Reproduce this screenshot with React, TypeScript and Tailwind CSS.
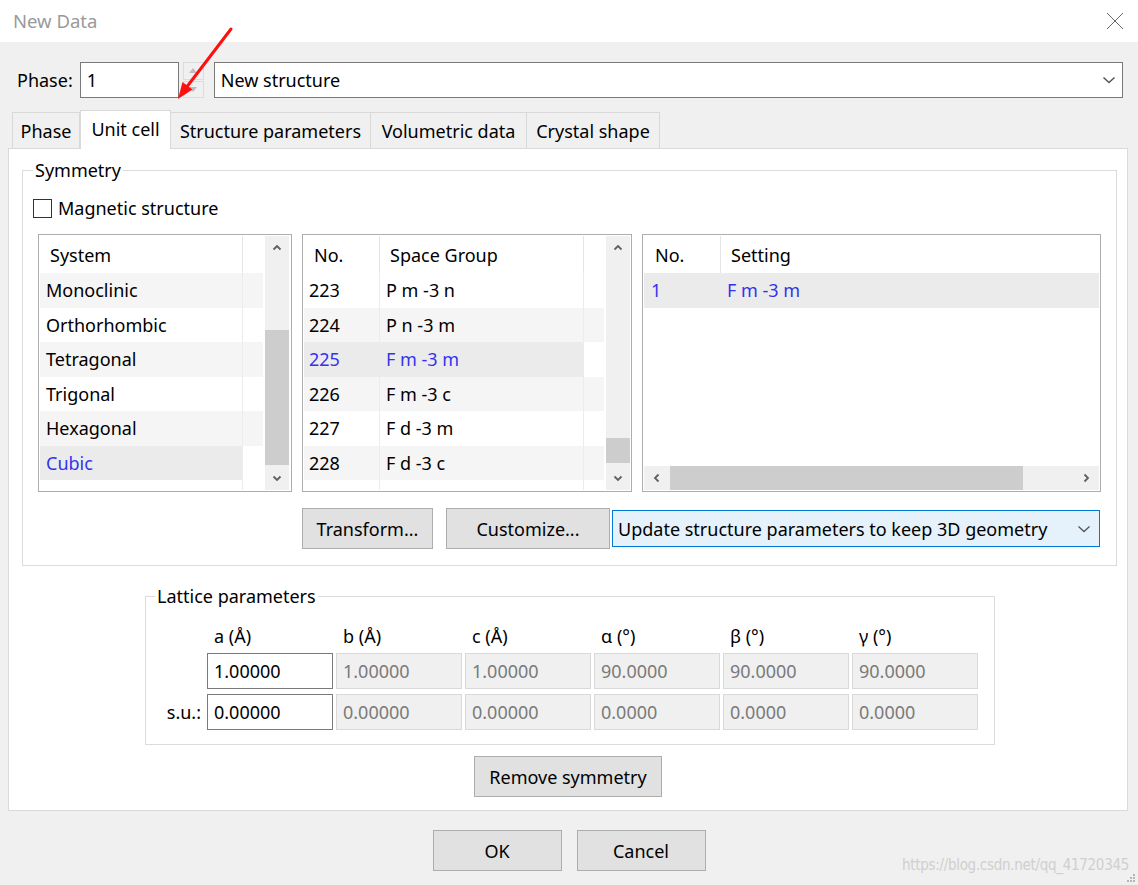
import React from 'react'

type Dir = 'up' | 'down' | 'left' | 'right'

function Caret({ dir, color = '#606060' }: { dir: Dir; color?: string }) {
  const d = {
    up: 'M1.5 6.5 L5 3 L8.5 6.5',
    down: 'M1.5 3.5 L5 7 L8.5 3.5',
    left: 'M6.5 1.5 L3 5 L6.5 8.5',
    right: 'M3.5 1.5 L7 5 L3.5 8.5',
  }[dir]
  return (
    <svg width="10" height="10" viewBox="0 0 10 10" fill="none">
      <path d={d} stroke={color} strokeWidth="1.8" />
    </svg>
  )
}

function VScroll({ thumb }: { thumb: string }) {
  return (
    <div className="w-[24px] h-full bg-[#f0f0f0] flex flex-col">
      <div className="h-[24px] flex items-center justify-center">
        <Caret dir="up" />
      </div>
      <div className={`w-full bg-[#cdcdcd] ${thumb}`} />
      <div className="flex-1" />
      <div className="h-[24px] flex items-center justify-center">
        <Caret dir="down" />
      </div>
    </div>
  )
}

function Button({ label, className = '' }: { label: string; className?: string }) {
  return (
    <div
      className={`h-[41px] bg-[#e1e1e1] border border-[#adadad] flex items-center justify-center text-black ${className}`}
    >
      {label}
    </div>
  )
}

const systems = ['Monoclinic', 'Orthorhombic', 'Tetragonal', 'Trigonal', 'Hexagonal', 'Cubic']
const groups = [
  ['223', 'P m -3 n'],
  ['224', 'P n -3 m'],
  ['225', 'F m -3 m'],
  ['226', 'F m -3 c'],
  ['227', 'F d -3 m'],
  ['228', 'F d -3 c'],
]
const latticeHeads = ['a (Å)', 'b (Å)', 'c (Å)', 'α (°)', 'β (°)', 'γ (°)']
const latticeVals = ['1.00000', '1.00000', '1.00000', '90.0000', '90.0000', '90.0000']
const latticeSu = ['0.00000', '0.00000', '0.00000', '0.0000', '0.0000', '0.0000']

export default function App() {
  return (
    <div className="relative w-[1138px] h-[885px] overflow-hidden bg-[#f0f0f0] font-['Noto_Sans',sans-serif] text-[18px] leading-none text-black">
      {/* title bar */}
      <div className="h-[42px] bg-white flex items-center justify-between pl-[13px] pr-[14px]">
        <span className="text-[#9a9a9a] text-[18.5px]">New Data</span>
        <svg width="18" height="18" viewBox="0 0 18 18">
          <path d="M1 1 L17 17 M17 1 L1 17" stroke="#666" strokeWidth="1" />
        </svg>
      </div>

      {/* phase row */}
      <div className="mt-[20px] pl-[17px] flex items-center h-[36px]">
        <span>Phase:</span>
        <div className="ml-[7px] w-[99px] h-[36px] bg-white border border-[#7a7a7a] flex items-center pl-[6px]">1</div>
        <div className="ml-[4px] w-[21px] h-[36px] flex flex-col gap-px">
          <div className="flex-1 border border-[#dcdcdc] flex items-center justify-center">
            <svg width="8" height="5" viewBox="0 0 8 5"><path d="M0 5 L4 0 L8 5 Z" fill="#bdbdbd" /></svg>
          </div>
          <div className="flex-1 border border-[#dcdcdc] flex items-center justify-center">
            <svg width="8" height="5" viewBox="0 0 8 5"><path d="M0 0 L4 5 L8 0 Z" fill="#bdbdbd" /></svg>
          </div>
        </div>
        <div className="ml-[10px] w-[909px] h-[36px] bg-white border border-[#7a7a7a] flex items-center justify-between pl-[6px] pr-[6px]">
          <span>New structure</span>
          <svg width="14" height="10" viewBox="0 0 14 10" fill="none">
            <path d="M1.5 2.5 L7 7.5 L12.5 2.5" stroke="#555" strokeWidth="1.5" />
          </svg>
        </div>
      </div>

      {/* tabs */}
      <div className="mt-[12px] ml-[12px] flex items-end h-[38px]">
        <div className="w-[68px] h-[36px] bg-[#f0f0f0] border border-b-0 border-[#d9d9d9] flex items-center justify-center">Phase</div>
        <div className="relative z-10 -mb-px w-[91px] h-[39px] bg-white border border-b-0 border-[#d9d9d9] flex items-center justify-center pb-[2px]">Unit cell</div>
        <div className="w-[200px] h-[36px] bg-[#f0f0f0] border border-b-0 border-l-0 border-[#d9d9d9] flex items-center justify-center">Structure parameters</div>
        <div className="w-[156px] h-[36px] bg-[#f0f0f0] border border-b-0 border-l-0 border-[#d9d9d9] flex items-center justify-center">Volumetric data</div>
        <div className="w-[133px] h-[36px] bg-[#f0f0f0] border border-b-0 border-l-0 border-[#d9d9d9] flex items-center justify-center">Crystal shape</div>
      </div>

      {/* tab panel */}
      <div className="ml-[8px] w-[1120px] h-[663px] bg-white border border-[#d9d9d9] flex flex-col">
        <fieldset className="mt-[9px] ml-[13px] w-[1095px] border border-[#dcdcdc] pl-[10px] pb-[16px]">
          <legend className="px-[2px] leading-[24px]">Symmetry</legend>
          <div className="mt-[16px] flex items-center h-[20px]">
            <div className="w-[19px] h-[19px] border border-[#333] bg-white" />
            <span className="ml-[6px]">Magnetic structure</span>
          </div>

          <div className="mt-[16px] ml-[5px] flex gap-[10px] h-[258px]">
            {/* systems */}
            <div className="w-[254px] h-full border border-[#adadad] bg-white p-px flex gap-[2px]">
              <div className="w-[223px] h-full flex flex-col">
                <div className="h-[37px] flex shrink-0">
                  <div className="w-[203px] border-r border-[#e5e5e5] flex items-center pl-[10px]">System</div>
                </div>
                {systems.map((s, i) => {
                  const sel = i === 5
                  return (
                    <div key={s} className={`h-[34.5px] shrink-0 flex ${!sel && i % 2 === 0 ? 'bg-[#f5f5f5]' : ''}`}>
                      <div
                        className={`w-[203px] border-r border-[#ececec] flex items-center pl-[6px] ${
                          sel ? 'bg-[#ebebeb] text-[#3333ee]' : ''
                        }`}
                      >
                        {s}
                      </div>
                    </div>
                  )
                })}
                <div className="flex-1 flex">
                  <div className="w-[203px] border-r border-[#ececec]" />
                </div>
              </div>
              <VScroll thumb="mt-[70px] h-[135px]" />
            </div>

            {/* space groups */}
            <div className="w-[330px] h-full border border-[#adadad] bg-white p-px flex gap-[2px]">
              <div className="w-[300px] h-full flex flex-col">
                <div className="h-[37px] flex shrink-0">
                  <div className="w-[76px] border-r border-[#e5e5e5] flex items-center pl-[10px]">No.</div>
                  <div className="w-[204px] border-r border-[#e5e5e5] flex items-center pl-[10px]">Space Group</div>
                </div>
                {groups.map(([n, g], i) => {
                  const sel = i === 2
                  return (
                    <div key={n} className={`h-[34.5px] shrink-0 flex ${i % 2 === 1 ? 'bg-[#f5f5f5]' : ''}`}>
                      <div className={`w-[280px] flex ${sel ? 'bg-[#ebebeb] text-[#3333ee]' : ''}`}>
                        <div className="w-[76px] border-r border-[#ececec] flex items-center pl-[5px]">{n}</div>
                        <div className="w-[204px] border-r border-[#ececec] flex items-center pl-[6px]">{g}</div>
                      </div>
                    </div>
                  )
                })}
                <div className="flex-1 flex">
                  <div className="w-[76px] border-r border-[#ececec]" />
                  <div className="w-[204px] border-r border-[#ececec]" />
                </div>
              </div>
              <VScroll thumb="mt-[178px] h-[25px]" />
            </div>

            {/* settings */}
            <div className="w-[459px] h-full border border-[#adadad] bg-white p-px flex flex-col">
              <div className="h-[37px] flex shrink-0">
                <div className="w-[77px] border-r border-[#e5e5e5] flex items-center pl-[11px]">No.</div>
                <div className="flex items-center pl-[10px]">Setting</div>
              </div>
              <div className="h-[34.5px] shrink-0 flex bg-[#ebebeb] text-[#3333ee]">
                <div className="w-[77px] flex items-center pl-[7px]">1</div>
                <div className="flex items-center pl-[6px]">F m -3 m</div>
              </div>
              <div className="flex-1" />
              <div className="h-[24px] shrink-0 bg-[#f0f0f0] flex items-center">
                <div className="w-[26px] flex justify-center">
                  <Caret dir="left" />
                </div>
                <div className="w-[353px] h-full bg-[#cdcdcd]" />
                <div className="flex-1" />
                <div className="w-[26px] flex justify-center">
                  <Caret dir="right" />
                </div>
              </div>
            </div>
          </div>

          <div className="mt-[16px] ml-[269px] flex items-center">
            <Button label="Transform..." className="w-[131px]" />
            <Button label="Customize..." className="ml-[13px] w-[164px]" />
            <div className="ml-[2px] w-[488px] h-[37px] bg-[#e5f1fb] border border-[#0078d7] flex items-center justify-between pl-[5px] pr-[8px]">
              <span>Update structure parameters to keep 3D geometry</span>
              <svg width="14" height="10" viewBox="0 0 14 10" fill="none">
                <path d="M1.5 2.5 L7 7.5 L12.5 2.5" stroke="#555" strokeWidth="1.3" />
              </svg>
            </div>
          </div>
        </fieldset>

        <fieldset className="mt-[18px] ml-[136px] w-[850px] border border-[#dcdcdc] pb-[14px]">
          <legend className="ml-[9px] px-[2px] leading-[24px]">Lattice parameters</legend>
          <div className="mt-[16px] flex h-[24px] items-center">
            <div className="w-[61px]" />
            <div className="flex gap-[3px]">
              {latticeHeads.map((h) => (
                <div key={h} className="w-[126px] pl-[7px]">{h}</div>
              ))}
            </div>
          </div>
          {[latticeVals, latticeSu].map((row, r) => (
            <div key={r} className="flex h-[36px] mt-[5px]">
              <div className="w-[61px] flex items-center justify-end pr-[6px]">{r === 1 ? 's.u.:' : ''}</div>
              <div className="flex gap-[3px]">
                {row.map((v, i) => (
                  <div
                    key={i}
                    className={`w-[126px] h-[36px] flex items-center pl-[6px] ${
                      i === 0
                        ? 'bg-white border border-[#7a7a7a] text-black'
                        : 'bg-[#f0f0f0] border border-[#d9d9d9] text-[#7a7a7a]'
                    }`}
                  >
                    {v}
                  </div>
                ))}
              </div>
            </div>
          ))}
        </fieldset>

        <div className="mt-[11px] flex justify-center">
          <Button label="Remove symmetry" className="w-[188px]" />
        </div>
      </div>

      {/* dialog buttons */}
      <div className="mt-[19px] flex justify-center gap-[15px]">
        <Button label="OK" className="w-[129px]" />
        <Button label="Cancel" className="w-[129px]" />
      </div>

      {/* watermark */}
      <div className="absolute right-[9px] bottom-[12px] text-[15px] text-[#cfcfcf] font-['Liberation_Sans_Narrow','DejaVu_Sans_Condensed',sans-serif] tracking-[-0.3px]">
        https://blog.csdn.net/qq_41720345
      </div>
      <svg className="absolute right-[2px] bottom-[2px]" width="10" height="10" viewBox="0 0 10 10">
        <rect x="7" y="1" width="2" height="2" fill="#b5b5b5" />
        <rect x="4" y="4" width="2" height="2" fill="#b5b5b5" />
        <rect x="7" y="4" width="2" height="2" fill="#b5b5b5" />
        <rect x="1" y="7" width="2" height="2" fill="#b5b5b5" />
        <rect x="4" y="7" width="2" height="2" fill="#b5b5b5" />
        <rect x="7" y="7" width="2" height="2" fill="#b5b5b5" />
      </svg>

      {/* red annotation arrow */}
      <svg className="absolute left-0 top-0 pointer-events-none" width="260" height="110" viewBox="0 0 260 110">
        <path d="M231 29 L186 88" stroke="#ff1010" strokeWidth="3" strokeLinecap="round" />
        <path d="M178 99 L192.5 89.5 L182.5 82 Z" fill="#ff1010" />
      </svg>
    </div>
  )
}
